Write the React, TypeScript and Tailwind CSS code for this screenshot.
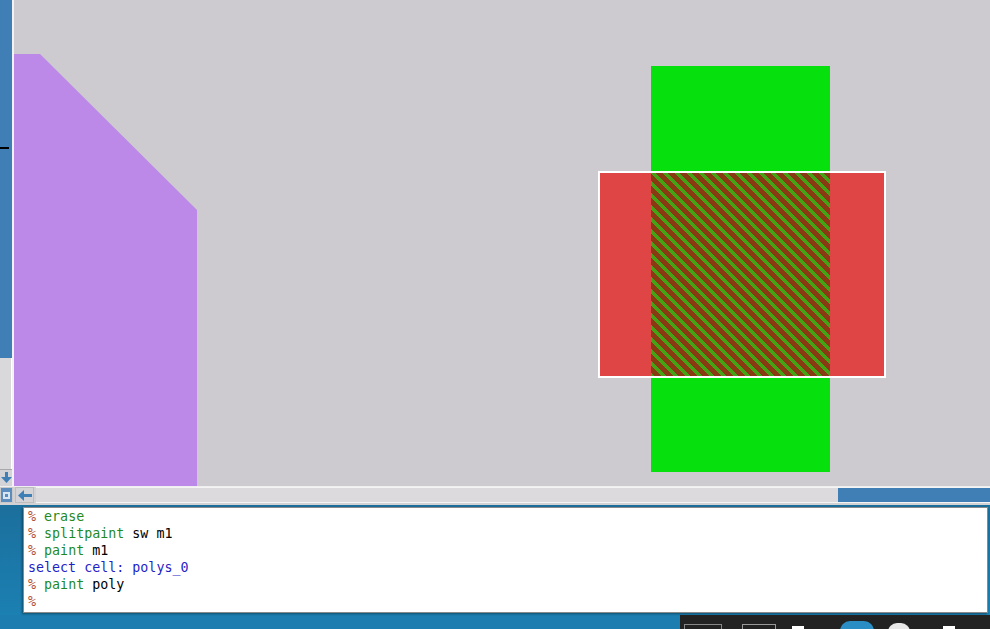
import React from 'react';

const mono = { fontFamily: '"DejaVu Sans Mono", "Liberation Mono", monospace' };

const ConsoleLine = ({ cmd, args }: { cmd: string; args?: string }) => (
	<div className="h-[17px] leading-[17px] whitespace-pre">
		<span className="text-[#b0503a]">%</span>
		<span className="text-[#1f8a1f]"> {cmd}</span>
		{args && <span className="text-black"> {args}</span>}
	</div>
);

const Canvas = () => (
	<div className="relative flex-1 h-full bg-[#cdcbcf] overflow-hidden">
		{/* purple polygon */}
		<svg className="absolute left-0 top-0" width="200" height="486">
			<polygon points="0,54 26,54 183,210 183,486 0,486" fill="#bc89e8" />
		</svg>
		{/* green vertical bar */}
		<div className="absolute left-[637px] top-[66px] w-[179px] h-[406px] bg-[#06e00c]" />
		{/* red box */}
		<div className="absolute left-[584px] top-[171px] w-[288px] h-[207px] border-2 border-white bg-[#df4545]" />
		{/* overlap hatch */}
		<div className="absolute left-[637px] top-[173px] w-[179px] h-[203px] bg-[linear-gradient(45deg,#44a214_20%,#8a3a12_20%,#8a3a12_50%,#44a214_50%,#44a214_70%,#8a3a12_70%)] bg-size-[12px_12px]" />
	</div>
);

const LeftScroll = () => (
	<div className="flex flex-col w-[12px] h-full">
		<div className="relative h-[358px] bg-[#3f7fb5]">
			<div className="absolute left-0 top-[147px] w-[9px] h-[2px] bg-black" />
		</div>
		<div className="flex-1 bg-[#d9d8db] border-r border-white" />
		<div className="h-[17px] flex items-center justify-center bg-[#d4d4d8] border-t border-[#a8a8a8]">
			<svg width="11" height="12" viewBox="0 0 11 12">
				<rect x="4" y="0" width="3" height="7" fill="#3f7fb5" />
				<polygon points="0,5 11,5 5.5,11" fill="#3f7fb5" />
			</svg>
		</div>
	</div>
);

const BottomBar = () => (
	<div className="flex h-[17px] bg-[#d2d1d4] border-t border-[#efefef]">
		<div className="w-[13px] flex items-center justify-center bg-[#5a8dbd] border border-[#c9c9c9]">
			<div className="w-[7px] h-[7px] border-2 border-[#d8e4ef]" />
		</div>
		<div className="w-[2px]" />
		<div className="w-[19px] flex items-center justify-center bg-[#d4d4d8] border border-[#bdbdbd]">
			<svg width="14" height="11" viewBox="0 0 14 11">
				<polygon points="0,5.5 6,0 6,11" fill="#3f7fb5" />
				<rect x="5" y="4" width="9" height="3" fill="#3f7fb5" />
			</svg>
		</div>
		<div className="w-[2px]" />
		<div className="flex flex-1 border-y border-[#f4f4f4]">
			<div className="flex-1 bg-[#dcdadd]" />
			<div className="w-[152px] bg-[#3f7fb5]" />
		</div>
	</div>
);

export default function App() {
	return (
		<div className="w-[990px] h-[629px] overflow-hidden bg-[#1b7db0] flex flex-col">
			<div className="flex flex-col shrink-0 h-[505px] bg-[#d2d1d4]">
				<div className="flex h-[486px]">
					<LeftScroll />
					<div className="w-[2px] h-full bg-[#f2f2f2]" />
					<Canvas />
				</div>
				<BottomBar />
			</div>
			<div className="flex shrink-0 h-[110px] bg-gradient-to-b from-[#1b6f9c] to-[#1b80b2]">
				<div className="w-[23px]" />
				<div className="flex-1 mt-[2px] mb-[2px] mr-[2px] bg-white border border-[#8a8a8a] shadow-[-1px_1px_2px_rgba(0,0,0,0.4)]">
					<div className="pl-[4px] text-[13.33px]" style={mono}>
						<ConsoleLine cmd="erase" />
						<ConsoleLine cmd="splitpaint" args="sw m1" />
						<ConsoleLine cmd="paint" args="m1" />
						<div className="h-[17px] leading-[17px] whitespace-pre text-[#1f1fc8]">select cell: polys_0</div>
						<ConsoleLine cmd="paint" args="poly" />
						<div className="h-[17px] leading-[17px] text-[#b0503a]">%</div>
					</div>
				</div>
			</div>
			<div className="flex flex-1 min-h-0 overflow-hidden">
				<div className="w-[680px]" />
				<div className="flex-1 flex items-start bg-[#222222] pt-[9px] overflow-hidden">
					<div className="ml-[4px] w-[38px] h-[6px] border-t border-x border-[#888]" />
					<div className="ml-[20px] w-[34px] h-[6px] border-t border-x border-[#999]" />
					<div className="ml-[16px] mt-[2px] w-[12px] h-[4px] bg-white" />
					<div className="ml-[36px] mt-[-3px] w-[34px] h-[20px] rounded-full bg-[#2a8ec4]" />
					<div className="ml-[14px] mt-[-1px] w-[22px] h-[18px] rounded-full bg-[#e8e8e8]" />
					<div className="ml-[33px] mt-[2px] w-[12px] h-[4px] bg-white" />
				</div>
			</div>
		</div>
	);
}
